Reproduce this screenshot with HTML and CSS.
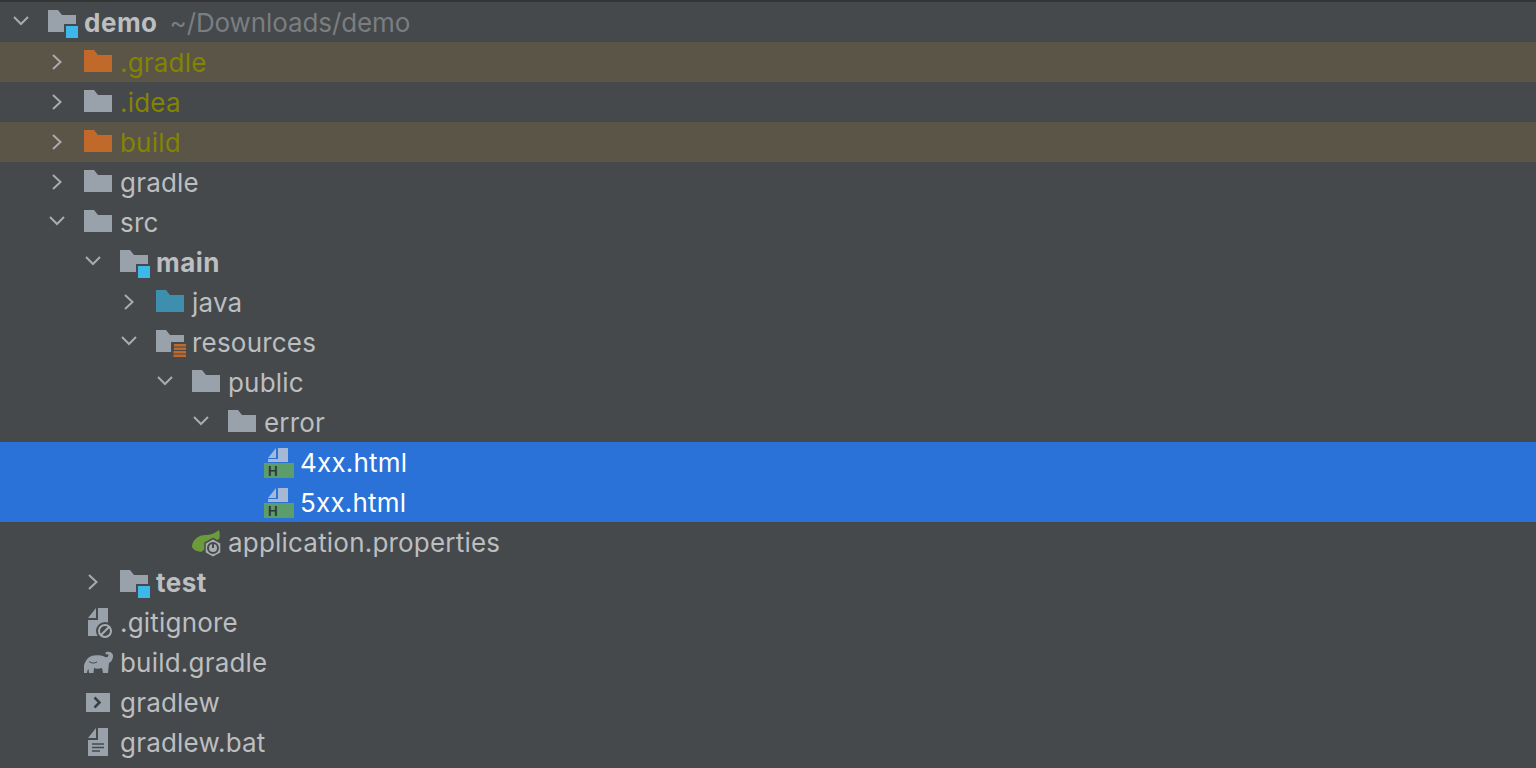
FILE: index.html
```html
<!DOCTYPE html>
<html lang="en">
<head>
    <meta charset="UTF-8">
    <meta name="viewport" content="width=device-width, initial-scale=1.0">
    <title>Project - demo</title>
    <link rel="stylesheet" href="styles.css">
</head>
<body>
    <svg class="sprites" width="0" height="0">
        <symbol id="arrow-right" viewBox="0 0 42 40"><path d="M17 13 L24.500 20 L17 27" fill="none" stroke="currentColor" stroke-width="2"/></symbol>
        <symbol id="arrow-down" viewBox="0 0 42 40"><path d="M14 15 L21 22 L28 15" fill="none" stroke="currentColor" stroke-width="2"/></symbol>
        <symbol id="folder" viewBox="0 0 36 40"><path d="M0 8 H10 L14 13 H28 V30 H0 Z" fill="currentColor"/></symbol>
        <symbol id="module" viewBox="0 0 36 40">
            <path d="M0 8 H10 L14 13 H28 V30 H0 Z" fill="#99a2aa"/>
            <rect x="16" y="22" width="16" height="16" fill="#45494c"/>
            <rect x="18" y="24" width="12" height="12" fill="#3cb9ea"/>
        </symbol>
        <symbol id="resources" viewBox="0 0 36 40">
            <path d="M0 8 H10 L14 13 H28 V30 H0 Z" fill="#99a2aa"/>
            <rect x="15" y="20" width="17" height="17" fill="#45494c"/>
            <path d="M18 22 H30 V24.500 H18 Z M18 25.500 H30 V28 H18 Z M17.500 29 H30 V31.500 H17.500 Z M17.500 32.500 H30 V35 H17.500 Z" fill="#c0692b"/>
        </symbol>
        <symbol id="html" viewBox="0 0 36 40">
            <path d="M4 16 L12 6 V16 Z M14 6 H24 V20 H4 V17 H14 Z" fill="#a5b8d6"/>
            <rect x="0" y="21" width="30" height="15" fill="#5c9e6b"/>
        </symbol>
        <symbol id="spring" viewBox="0 0 36 40">
            <path d="M0 24 C1 17 7 13 13 13 C18 13 22 12 27 8 C28 12 28 15 27 17 L9 30 C3 29 0 27 0 24 Z" fill="#6c9b3c"/>
            <path d="M21 16.500 L29 21 V31 L21 35.500 L13 31 V21 Z" fill="#a9adb0" stroke="#45494c" stroke-width="1.500"/>
            <circle cx="21" cy="26" r="5" fill="none" stroke="#45494c" stroke-width="2"/>
            <path d="M21 21 V26" stroke="#45494c" stroke-width="2"/>
        </symbol>
        <symbol id="gitignore" viewBox="0 0 36 40">
            <path d="M4 16 L12 6 V16 Z M14 6 H24 V34 H4 V18 H14 Z" fill="#99a2aa"/>
            <circle cx="21" cy="29" r="9" fill="#45494c"/>
            <circle cx="21" cy="29" r="6" fill="none" stroke="#a9adb0" stroke-width="2"/>
            <path d="M17 33 L25 25" stroke="#a9adb0" stroke-width="2"/>
        </symbol>
        <symbol id="gradle" viewBox="0 0 36 40">
            <path d="M-1 31 C-1 22 3 14 10 13.500 C14 13 17 13 19 14 C21 15 23 16 24 14.500 C25 13 24 11.500 22.500 12.500 L21 11 C23 9 27 9.500 28.500 12 C30 15 28 20 25 21 L24 31 H19 L18 26 C15 27 12 27 10 26 L9.500 31 H5 L4.500 27 C3.500 28 3 29.500 3 31 Z" fill="#99a2aa"/>
            <path d="M5 19.500 C8 21.500 10 21.500 13 20" fill="none" stroke="#45494c" stroke-width="1"/>
        </symbol>
        <symbol id="terminal" viewBox="0 0 36 40">
            <rect x="2" y="11" width="24" height="19" fill="#99a2aa"/>
            <path d="M10.500 15.500 L15.500 20.500 L10.500 25.500" fill="none" stroke="#3c3f41" stroke-width="2.500"/>
        </symbol>
        <symbol id="textfile" viewBox="0 0 36 40">
            <path d="M4 16 L12 6 V16 Z M14 6 H24 V34 H4 V18 H14 Z" fill="#99a2aa"/>
            <path d="M8 22 H20 M8 25.500 H20 M8 29 H16" stroke="#45494c" stroke-width="1.500"/>
        </symbol>
    </svg>

    <div class="top-line"></div>
    <ul class="tree">
        <li class="row d0">
            <svg class="arrow"><use href="#arrow-down"/></svg>
            <svg class="icon"><use href="#module"/></svg>
            <span class="name bold">demo</span><span class="path">~/Downloads/demo</span>
        </li>
        <li class="row d1 ignored">
            <svg class="arrow"><use href="#arrow-right"/></svg>
            <svg class="icon orange"><use href="#folder"/></svg>
            <span class="name olive">.gradle</span>
        </li>
        <li class="row d1">
            <svg class="arrow"><use href="#arrow-right"/></svg>
            <svg class="icon grey"><use href="#folder"/></svg>
            <span class="name olive">.idea</span>
        </li>
        <li class="row d1 ignored">
            <svg class="arrow"><use href="#arrow-right"/></svg>
            <svg class="icon orange"><use href="#folder"/></svg>
            <span class="name olive">build</span>
        </li>
        <li class="row d1">
            <svg class="arrow"><use href="#arrow-right"/></svg>
            <svg class="icon grey"><use href="#folder"/></svg>
            <span class="name">gradle</span>
        </li>
        <li class="row d1">
            <svg class="arrow"><use href="#arrow-down"/></svg>
            <svg class="icon grey"><use href="#folder"/></svg>
            <span class="name">src</span>
        </li>
        <li class="row d2">
            <svg class="arrow"><use href="#arrow-down"/></svg>
            <svg class="icon"><use href="#module"/></svg>
            <span class="name bold">main</span>
        </li>
        <li class="row d3">
            <svg class="arrow"><use href="#arrow-right"/></svg>
            <svg class="icon teal"><use href="#folder"/></svg>
            <span class="name">java</span>
        </li>
        <li class="row d3">
            <svg class="arrow"><use href="#arrow-down"/></svg>
            <svg class="icon"><use href="#resources"/></svg>
            <span class="name">resources</span>
        </li>
        <li class="row d4">
            <svg class="arrow"><use href="#arrow-down"/></svg>
            <svg class="icon grey"><use href="#folder"/></svg>
            <span class="name">public</span>
        </li>
        <li class="row d5">
            <svg class="arrow"><use href="#arrow-down"/></svg>
            <svg class="icon grey"><use href="#folder"/></svg>
            <span class="name">error</span>
        </li>
        <li class="row d6 selected">
            <span class="arrow"></span>
            <svg class="icon"><use href="#html"/><text x="4" y="34" class="html-h">H</text></svg>
            <span class="name">4xx.html</span>
        </li>
        <li class="row d6 selected">
            <span class="arrow"></span>
            <svg class="icon"><use href="#html"/><text x="4" y="34" class="html-h">H</text></svg>
            <span class="name">5xx.html</span>
        </li>
        <li class="row d4">
            <span class="arrow"></span>
            <svg class="icon"><use href="#spring"/></svg>
            <span class="name">application.properties</span>
        </li>
        <li class="row d2">
            <svg class="arrow"><use href="#arrow-right"/></svg>
            <svg class="icon"><use href="#module"/></svg>
            <span class="name bold">test</span>
        </li>
        <li class="row d1">
            <span class="arrow"></span>
            <svg class="icon"><use href="#gitignore"/></svg>
            <span class="name">.gitignore</span>
        </li>
        <li class="row d1">
            <span class="arrow"></span>
            <svg class="icon"><use href="#gradle"/></svg>
            <span class="name">build.gradle</span>
        </li>
        <li class="row d1">
            <span class="arrow"></span>
            <svg class="icon"><use href="#terminal"/></svg>
            <span class="name">gradlew</span>
        </li>
        <li class="row d1">
            <span class="arrow"></span>
            <svg class="icon"><use href="#textfile"/></svg>
            <span class="name">gradlew.bat</span>
        </li>
    </ul>
</body>
</html>
```

FILE: styles.css
```css
html, body {
    height: 100%;
}
body {
    margin: 0;
    background-color: #45494c;
    color: #bcbec0;
    font-family: 'Inter', 'Liberation Sans', sans-serif;
    font-size: 26px;
    overflow: hidden;
}
.sprites {
    display: block;
    height: 0;
}
.top-line {
    height: 2px;
    background-color: #333537;
}
.tree {
    list-style-type: none;
    margin: 0;
    padding: 0;
}
.row {
    display: flex;
    align-items: center;
    height: 40px;
    white-space: nowrap;
}
.d0 { padding-left: 0; }
.d1 { padding-left: 36px; }
.d2 { padding-left: 72px; }
.d3 { padding-left: 108px; }
.d4 { padding-left: 144px; }
.d5 { padding-left: 180px; }
.d6 { padding-left: 216px; }
.arrow {
    flex: none;
    width: 42px;
    height: 40px;
    margin-right: 6px;
    color: #a9abad;
}
.icon {
    flex: none;
    width: 36px;
    height: 40px;
    overflow: visible;
}
.orange { color: #c0692b; }
.grey { color: #99a2aa; }
.teal { color: #3e8fad; }
.html-h {
    font-family: 'Inter', 'Liberation Sans', sans-serif;
    font-size: 13px;
    font-weight: 700;
    fill: #33373a;
}
.name {
    letter-spacing: 0.2px;
}
.bold {
    font-weight: 700;
    letter-spacing: 0.5px;
}
.olive {
    color: #848400;
}
.path {
    margin-left: 12px;
    letter-spacing: -0.1px;
    color: #7b7e81;
}
.ignored {
    background-color: #5a5547;
}
.selected {
    background-color: #2a72d8;
    color: #ffffff;
}
```
